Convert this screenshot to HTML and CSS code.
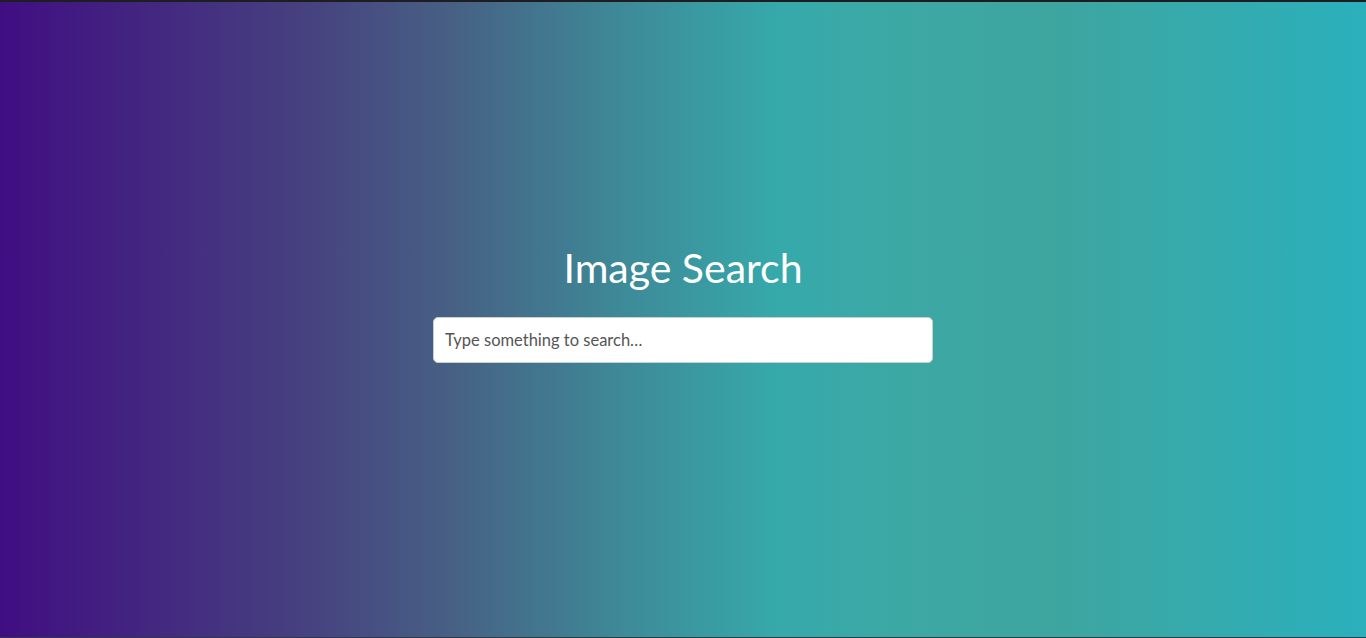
FILE: index.html
```html
<!DOCTYPE html>
<html lang="en">
<head>
<meta charset="utf-8">
<title>Image Search</title>
<link rel="stylesheet" href="styles.css">
</head>
<body>
<main class="page">
  <h1 class="title">Image Search</h1>
  <input class="search" type="text" placeholder="Type something to search…">
</main>
</body>
</html>
```
FILE: styles.css
```css
html, body {
  margin: 0;
  padding: 0;
  height: 100%;
}
body {
  box-sizing: border-box;
  border-top: 2px solid #1e1e22;
  border-bottom: 1px solid #2e3a40;
  background: linear-gradient(to right, #400e82 0%, #46407f 22%, #476084 33%, #3e8897 45%, #36a9ab 57%, #3ca8a4 66%, #3ea59f 77%, #2bb0bc 100%);
  font-family: "Lato", "Open Sans", sans-serif;
}
.page {
  display: flex;
  flex-direction: column;
  align-items: center;
  padding-top: 240px;
}
.title {
  margin: 0;
  color: #fff;
  font-weight: 400;
  font-size: 41px;
  line-height: 52px;
}
.search {
  margin-top: 23px;
  box-sizing: border-box;
  width: 500px;
  height: 46px;
  padding: 0 11px;
  border: 1px solid #c9cfd2;
  border-radius: 5px;
  background: #fff;
  font-family: "Lato", "Open Sans", sans-serif;
  font-size: 16.5px;
  color: #333;
  outline: none;
}
.search::placeholder {
  color: #555;
}
```
